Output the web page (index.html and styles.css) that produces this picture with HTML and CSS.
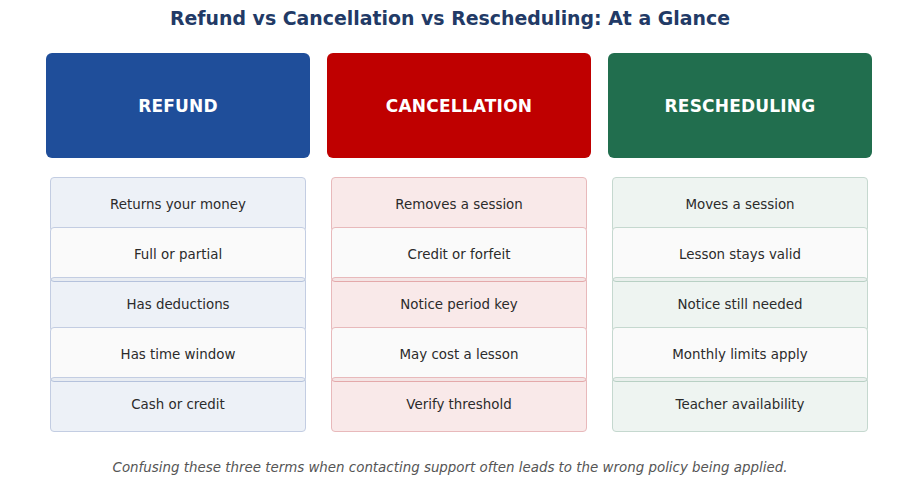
FILE: index.html
```html
<!DOCTYPE html>
<html>
<head>
<meta charset="utf-8">
<link rel="stylesheet" href="styles.css">
</head>
<body>
<div class="page">
  <h1 class="title">Refund vs Cancellation vs Rescheduling: At a Glance</h1>
  <div class="cols">
    <div class="col blue">
      <div class="head">REFUND</div>
      <div class="items">
        <div class="item tint">Returns your money</div>
        <div class="item plain">Full or partial</div>
        <div class="item tint">Has deductions</div>
        <div class="item plain">Has time window</div>
        <div class="item tint">Cash or credit</div>
      </div>
    </div>
    <div class="col red">
      <div class="head">CANCELLATION</div>
      <div class="items">
        <div class="item tint">Removes a session</div>
        <div class="item plain">Credit or forfeit</div>
        <div class="item tint">Notice period key</div>
        <div class="item plain">May cost a lesson</div>
        <div class="item tint">Verify threshold</div>
      </div>
    </div>
    <div class="col green">
      <div class="head">RESCHEDULING</div>
      <div class="items">
        <div class="item tint">Moves a session</div>
        <div class="item plain">Lesson stays valid</div>
        <div class="item tint">Notice still needed</div>
        <div class="item plain">Monthly limits apply</div>
        <div class="item tint">Teacher availability</div>
      </div>
    </div>
  </div>
  <p class="note">Confusing these three terms when contacting support often leads to the wrong policy being applied.</p>
</div>
</body>
</html>
```
FILE: styles.css
```css
html, body {
  margin: 0;
  padding: 0;
  background: #ffffff;
}
.page {
  width: 900px;
  height: 496px;
  font-family: "DejaVu Sans", sans-serif;
  display: flex;
  flex-direction: column;
}
.title {
  margin: 0;
  padding-top: 7px;
  height: 22px;
  line-height: 22px;
  text-align: center;
  font-size: 18.9px;
  font-weight: bold;
  color: #223a66;
}
.cols {
  display: flex;
  gap: 17px;
  padding-left: 46px;
  margin-top: 24px;
}
.col {
  width: 264px;
  display: flex;
  flex-direction: column;
}
.head {
  height: 105px;
  border-radius: 6px;
  display: flex;
  align-items: center;
  justify-content: center;
  color: #ffffff;
  font-weight: bold;
  font-size: 17px;
  letter-spacing: 0.2px;
}
.blue .head { background: #1f4e9a; }
.red .head { background: #bf0000; }
.green .head { background: #216e4e; }
.items {
  margin: 19px 4px 0 4px;
  display: flex;
  flex-direction: column;
}
.item {
  position: relative;
  height: 53px;
  margin-top: -5px;
  border: 1px solid;
  border-radius: 4px;
  display: flex;
  align-items: center;
  justify-content: center;
  font-size: 13.4px;
  color: #2b2b2b;
}
.item:first-child { margin-top: 0; }
.plain { background: #fafafa; }
.blue .item { border-color: #c3cde2; }
.red .item { border-color: #e8b9bb; }
.green .item { border-color: #c5d8cf; }
.blue .tint { background: rgba(31, 78, 154, 0.08); }
.red .tint { background: rgba(191, 0, 0, 0.085); }
.green .tint { background: rgba(33, 110, 78, 0.08); }
.note {
  margin: 28px 0 0 0;
  text-align: center;
  font-style: italic;
  font-size: 13.4px;
  color: #555555;
}
```
